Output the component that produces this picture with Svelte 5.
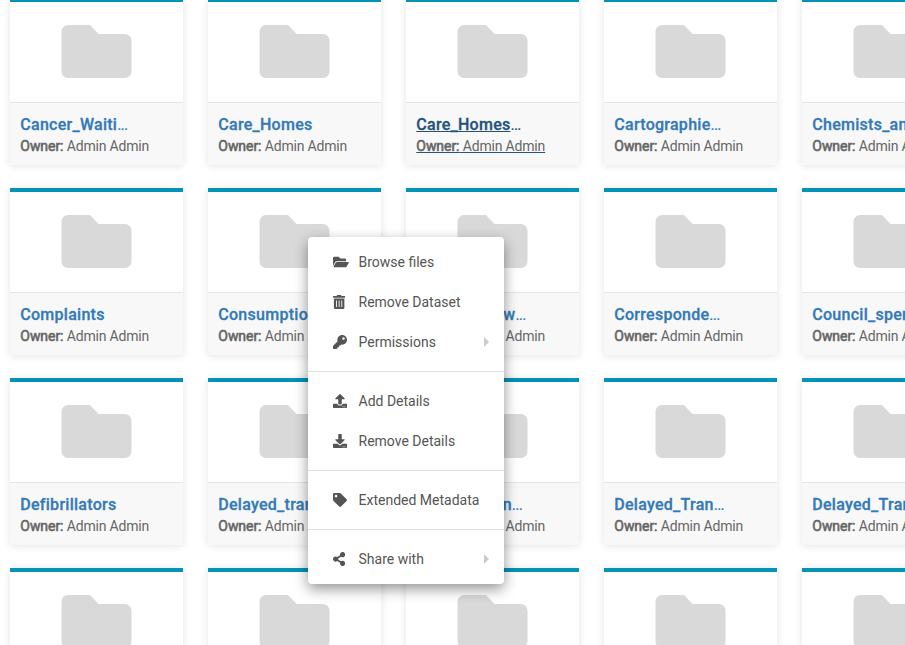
<script>
  const rows = [
    [['Cancer_Waiti', true], ['Care_Homes', false], ['Care_Homes', true, true], ['Cartographie', true], ['Chemists_and', true]],
    [['Complaints', false], ['Consumption', true], ['Council_draw', true], ['Corresponde', true], ['Council_spen', true]],
    [['Defibrillators', false], ['Delayed_tran', true], ['Delayed_tran', true], ['Delayed_Tran', true], ['Delayed_Tran', true]],
    [['Dentists', false], ['Deprivation', false], ['Development', true], ['Disabled_Par', true], ['Domestic_Wa', true]]
  ];

  const dots = 'zm-124 88c0-11-9-20-20-20s-20 9-20 20 9 20 20 20 20-9 20-20zm64 0c0-11-9-20-20-20s-20 9-20 20 9 20 20 20 20-9 20-20z';

  const groups = [
    [
      { label: 'Browse files', w: 576, d: 'M572.694 292.093L500.27 416.248A63.997 63.997 0 0 1 444.989 448H45.025c-18.523 0-30.064-20.093-20.731-36.093l72.424-124.155A64 64 0 0 1 152 256h399.964c18.523 0 30.064 20.093 20.73 36.093zM152 224h328v-48c0-26.51-21.49-48-48-48H272l-64-64H48C21.49 64 0 85.49 0 112v278.046l69.077-118.418C86.214 242.25 117.989 224 152 224z' },
      { label: 'Remove Dataset', w: 448, d: 'M32 464a48 48 0 0 0 48 48h288a48 48 0 0 0 48-48V128H32zm272-256a16 16 0 0 1 32 0v224a16 16 0 0 1-32 0zm-96 0a16 16 0 0 1 32 0v224a16 16 0 0 1-32 0zm-96 0a16 16 0 0 1 32 0v224a16 16 0 0 1-32 0zM432 32H312l-9.4-18.7A24 24 0 0 0 281.1 0H166.8a23.72 23.72 0 0 0-21.4 13.3L136 32H16A16 16 0 0 0 0 48v32a16 16 0 0 0 16 16h416a16 16 0 0 0 16-16V48a16 16 0 0 0-16-16z' },
      { label: 'Permissions', sub: true, w: 512, d: 'M512 176.001C512 273.203 433.202 352 336 352c-11.22 0-22.19-1.062-32.827-3.069l-24.012 27.014A23.999 23.999 0 0 1 261.223 384H224v40c0 13.255-10.745 24-24 24h-40v40c0 13.255-10.745 24-24 24H24c-13.255 0-24-10.745-24-24v-78.059c0-6.365 2.529-12.47 7.029-16.971l161.802-161.802C163.108 213.814 160 195.271 160 176 160 78.798 238.797.001 335.999 0 433.488-.001 512 78.511 512 176.001zM336 128c0 26.51 21.49 48 48 48s48-21.49 48-48-21.49-48-48-48-48 21.49-48 48z' }
    ],
    [
      { label: 'Add Details', w: 512, d: 'M296 384h-80c-13.3 0-24-10.7-24-24V192h-87.7c-17.8 0-26.7-21.5-14.1-34.1L242.3 5.7c7.5-7.5 19.8-7.5 27.3 0l152.2 152.2c12.6 12.6 3.7 34.1-14.1 34.1H320v168c0 13.3-10.7 24-24 24zm216-8v112c0 13.3-10.7 24-24 24H24c-13.3 0-24-10.7-24-24V376c0-13.3 10.7-24 24-24h136v8c0 30.9 25.1 56 56 56h80c30.9 0 56-25.1 56-56v-8h136c13.3 0 24 10.7 24 24' + dots },
      { label: 'Remove Details', w: 512, d: 'M216 0h80c13.3 0 24 10.7 24 24v168h87.7c17.8 0 26.7 21.5 14.1 34.1L269.7 378.3c-7.5 7.5-19.8 7.5-27.3 0L90.1 226.1c-12.6-12.6-3.7-34.1 14.1-34.1H192V24c0-13.3 10.7-24 24-24zm296 376v112c0 13.3-10.7 24-24 24H24c-13.3 0-24-10.7-24-24V376c0-13.3 10.7-24 24-24h146.7l49 49c20.1 20.1 52.5 20.1 72.6 0l49-49H488c13.3 0 24 10.7 24 24' + dots }
    ],
    [
      { label: 'Extended Metadata', w: 512, d: 'M0 252.118V48C0 21.49 21.49 0 48 0h204.118a48 48 0 0 1 33.941 14.059l211.882 211.882c18.745 18.745 18.745 49.137 0 67.882L293.823 497.941c-18.745 18.745-49.137 18.745-67.882 0L14.059 286.059A48 48 0 0 1 0 252.118zM112 64c-26.51 0-48 21.49-48 48s21.49 48 48 48 48-21.49 48-48-21.49-48-48-48z' }
    ],
    [
      { label: 'Share with', sub: true, w: 448, d: 'M352 320c-22.608 0-43.387 7.819-59.79 20.895l-102.486-64.054a96.551 96.551 0 0 0 0-41.683l102.486-64.054C308.613 184.181 329.392 192 352 192c53.019 0 96-42.981 96-96S405.019 0 352 0s-96 42.981-96 96c0 7.158.79 14.13 2.276 20.841L155.79 180.895C139.387 167.819 118.608 160 96 160c-53.019 0-96 42.981-96 96s42.981 96 96 96c22.608 0 43.387-7.819 59.79-20.895l102.486 64.054A96.301 96.301 0 0 0 256 416c0 53.019 42.981 96 96 96s96-42.981 96-96-42.981-96-96-96z' }
    ]
  ];
</script>

<main>
  <div class="grid">
    {#each rows as row}
      {#each row as [name, cut, hover]}
        <article class="card">
          <div class="thumb">
            <svg width="71" height="53" viewBox="0 0 71 53">
              <path d="M7 0H29L37.5 9H64a6.5 6.5 0 0 1 6.5 6.5V46.5a6.5 6.5 0 0 1-6.5 6.5H7a6.5 6.5 0 0 1-6.5-6.5V6.5a6.5 6.5 0 0 1 6.5-6.5z" />
            </svg>
          </div>
          <div class="info" class:hover>
            <div class="title"><b>{name}</b>{#if cut}<span>...</span>{/if}</div>
            <div class="owner"><span><b>Owner:</b> Admin Admin</span></div>
          </div>
        </article>
      {/each}
    {/each}
  </div>

  <div class="menu">
    {#each groups as group, i}
      {#if i > 0}<hr />{/if}
      {#each group as item}
        <div class="item">
          <span class="icon">
            <svg height="14" width={(item.w / 512) * 14} viewBox="0 0 {item.w} 512"><path d={item.d} /></svg>
          </span>
          <span class="label">{item.label}</span>
          {#if item.sub}<i class="arrow"></i>{/if}
        </div>
      {/each}
    {/each}
  </div>
</main>

<style>
  :global(body) {
    margin: 0;
    background: #fff;
  }
  main {
    position: relative;
    width: 905px;
    height: 645px;
    overflow: hidden;
    font-family: Roboto, 'Liberation Sans', sans-serif;
    font-size: 14px;
  }
  .grid {
    display: grid;
    grid-template-columns: repeat(5, 173px);
    grid-auto-rows: 167px;
    gap: 23px 25px;
    margin: -2px 0 0 10px;
  }
  .card {
    box-sizing: border-box;
    border-top: 4px solid #0293b7;
    background: #fff;
    box-shadow: 0 1px 8px rgba(0, 0, 0, 0.11);
  }
  .thumb {
    box-sizing: border-box;
    height: 101px;
    padding: 23px 0 0 51px;
    border-bottom: 1px solid #e5e5e5;
  }
  .thumb svg {
    display: block;
    fill: #d9d9d9;
  }
  .info {
    height: 62px;
    box-sizing: border-box;
    padding: 10px 0 0 10.3px;
    background: #f8f8f8;
    white-space: nowrap;
    color: #666;
  }
  .title {
    height: 23px;
    line-height: 23px;
    font-size: 16px;
    color: #337ab7;
  }
  .title b {
    font-weight: 500;
    letter-spacing: 0.27px;
    -webkit-text-stroke: 0.3px currentColor;
  }
  .title span {
    letter-spacing: -0.8px;
    -webkit-text-stroke: 0.2px currentColor;
  }
  .owner {
    line-height: 20px;
    letter-spacing: -0.18px;
  }
  .owner b {
    font-weight: 400;
    letter-spacing: -0.05px;
    -webkit-text-stroke: 0.6px currentColor;
  }
  .hover .title {
    color: #23527c;
  }
  .hover .title b,
  .hover .owner span {
    text-decoration: underline;
    text-decoration-color: #23527c;
  }
  .menu {
    position: absolute;
    left: 308px;
    top: 237px;
    width: 196px;
    height: 347px;
    box-sizing: border-box;
    padding: 5px 0;
    background: #fff;
    border-radius: 4px;
    box-shadow: 0 5px 14px rgba(0, 0, 0, 0.42);
    color: #555;
  }
  .item {
    display: flex;
    align-items: center;
    height: 40px;
    padding: 0 15px 0 25px;
  }
  .icon {
    width: 25.5px;
    display: flex;
  }
  .icon svg {
    fill: #555;
  }
  .label {
    flex: 1;
    white-space: nowrap;
  }
  .arrow {
    border: 5px solid transparent;
    border-right: 0;
    border-left-color: #ccc;
  }
  hr {
    height: 1px;
    margin: 9px 0;
    border: 0;
    background: #e0e0e0;
  }
</style>
